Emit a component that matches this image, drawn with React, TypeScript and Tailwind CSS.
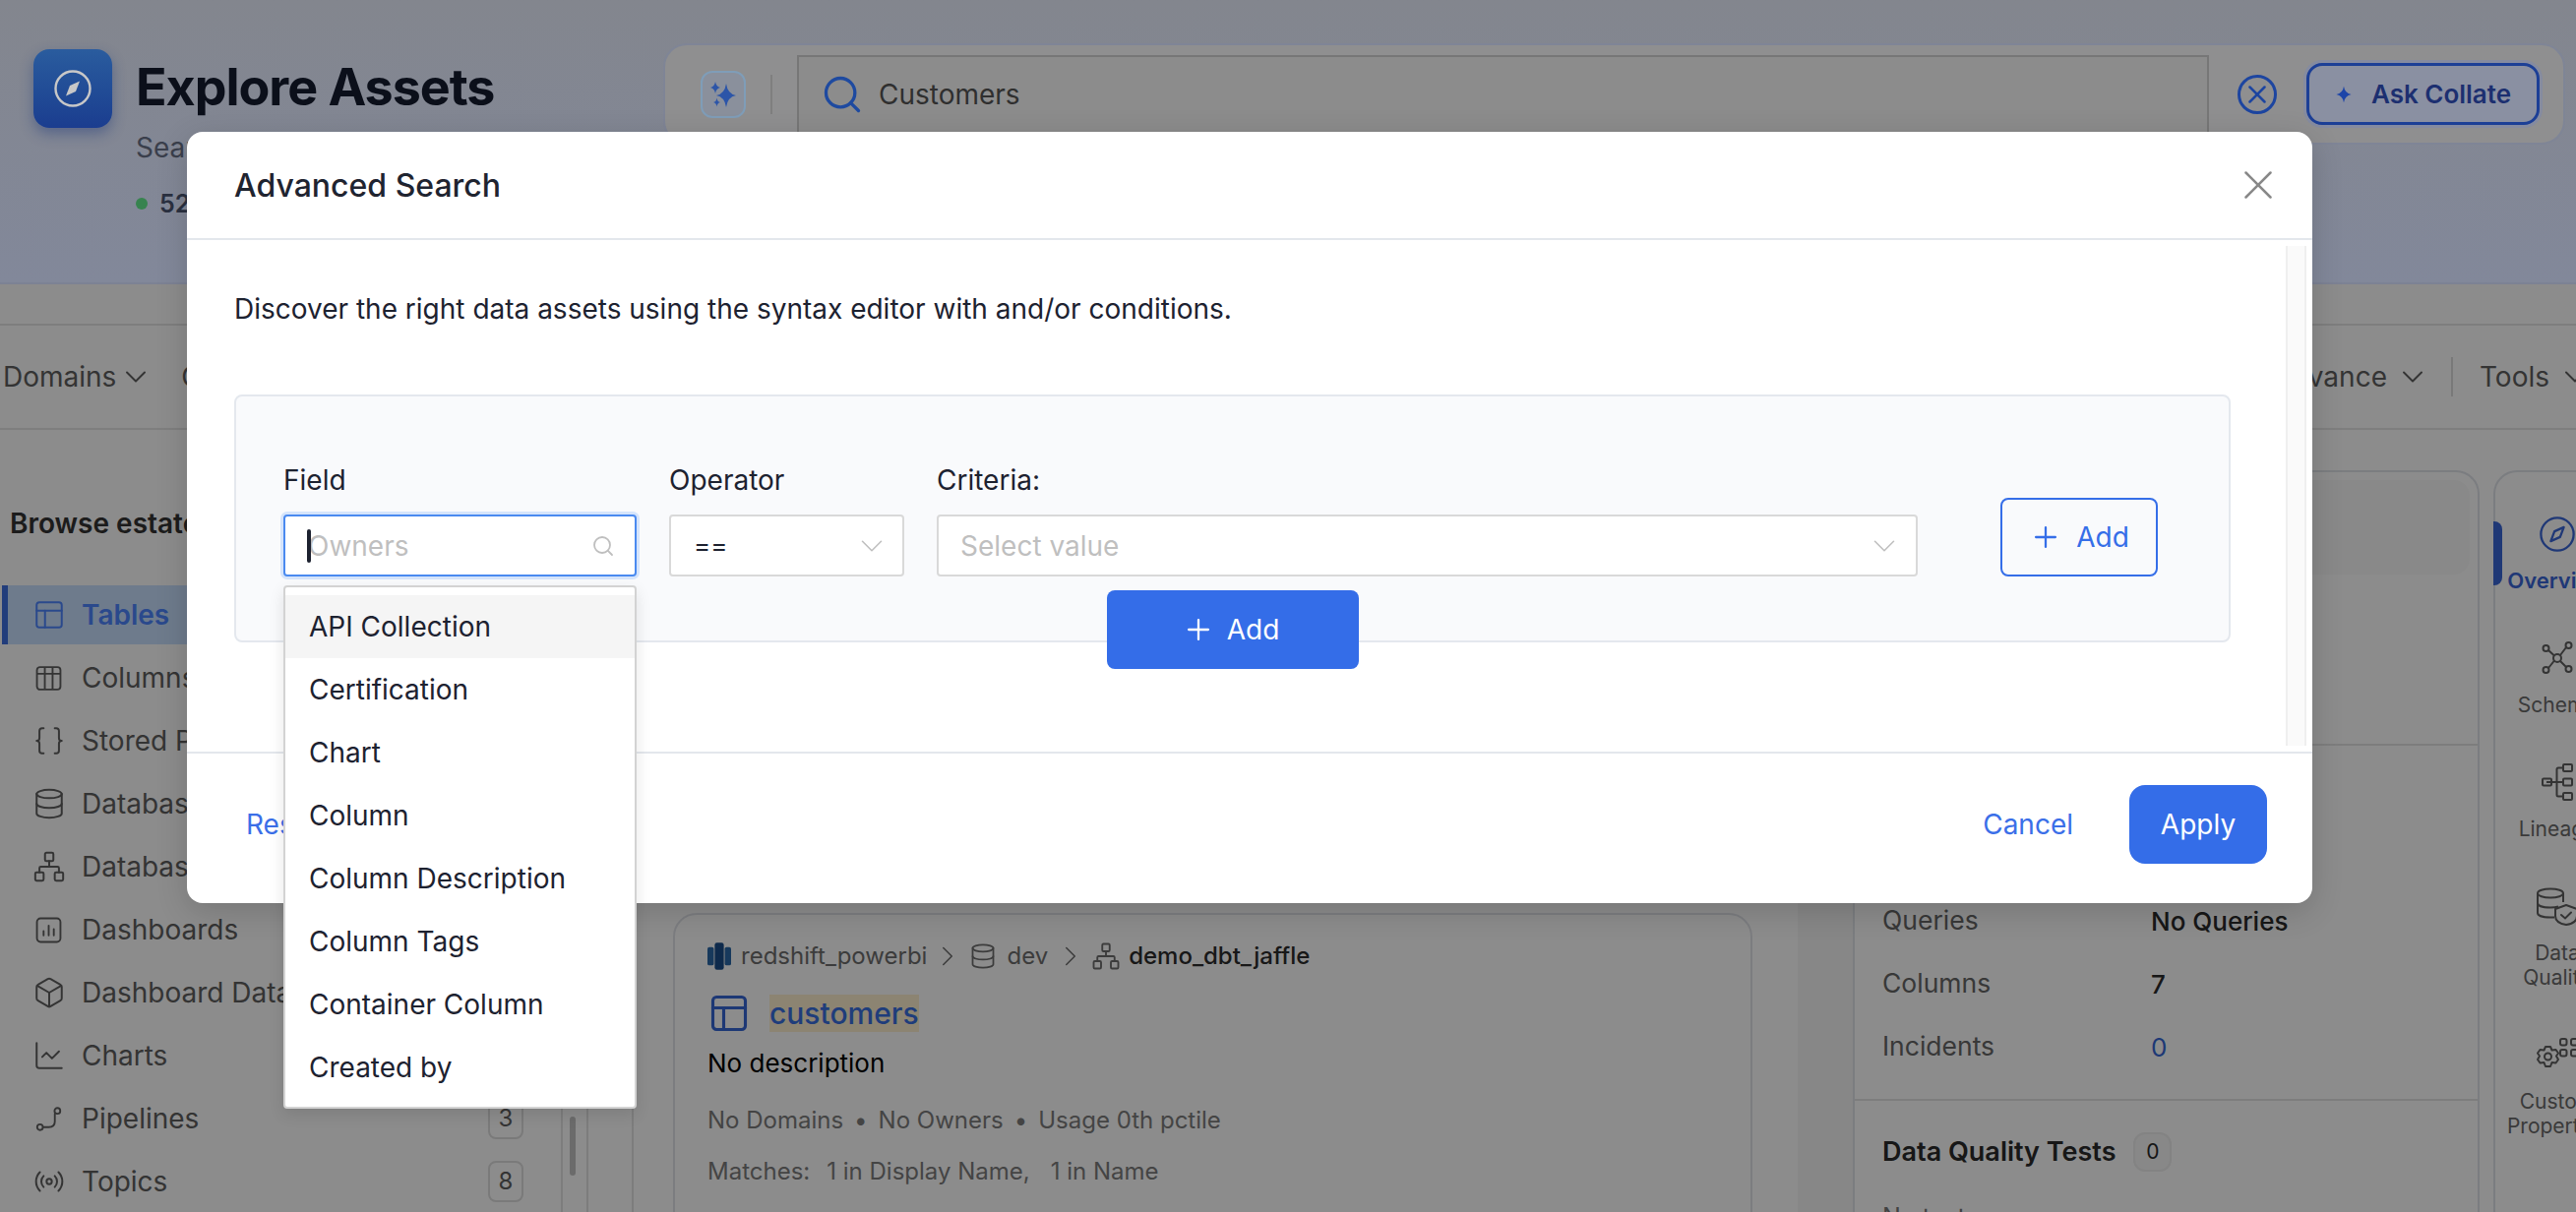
import { useState, type ReactNode } from 'react';
import {
  Box,
  Braces,
  ChartLine,
  ChevronDown,
  ChevronRight,
  Database,
  Network,
  PanelsTopLeft,
  Plus,
  Radio,
  Search,
  X,
} from 'lucide-react';

const FONT = "font-['Inter','Noto_Sans',sans-serif]";

function CompassMark({ className, filled }: { className?: string; filled?: boolean }) {
  return (
    <svg viewBox="0 0 40 40" fill="none" stroke="currentColor" strokeWidth="2.4" className={className}>
      <circle cx="20" cy="20" r="17.5" />
      <path
        d="M27 12.5 23 23 13 27.5 17 17z"
        fill={filled ? 'currentColor' : 'none'}
        stroke={filled ? 'none' : 'currentColor'}
        strokeLinejoin="round"
      />
    </svg>
  );
}

function FourStar({ className }: { className?: string }) {
  return (
    <svg viewBox="0 0 24 24" fill="currentColor" className={className}>
      <path d="M12 1Q13.5 10.5 22 12Q13.5 13.5 12 23Q10.5 13.5 2 12Q10.5 10.5 12 1Z" />
    </svg>
  );
}

function ColumnsIcon({ className }: { className?: string }) {
  return (
    <svg viewBox="0 0 26 26" fill="none" stroke="currentColor" strokeWidth="1.8" className={className}>
      <rect x="1.5" y="2" width="23" height="22" rx="3" />
      <path d="M1.5 8.5h23M9.2 2v22M16.8 2v22" />
    </svg>
  );
}

function DashboardIcon({ className }: { className?: string }) {
  return (
    <svg viewBox="0 0 26 26" fill="none" stroke="currentColor" strokeWidth="1.8" className={className}>
      <rect x="1.5" y="1.5" width="23" height="23" rx="3.5" />
      <path d="M8 18v-4M13 18V8.5M18 18v-6" strokeLinecap="round" />
    </svg>
  );
}

function PipelineIcon({ className }: { className?: string }) {
  return (
    <svg viewBox="0 0 26 26" fill="none" stroke="currentColor" strokeWidth="1.8" className={className}>
      <circle cx="4.5" cy="21" r="2.8" />
      <circle cx="21.5" cy="5" r="2.8" />
      <path d="M7.5 21h5.5c4 0 6-2 6-5.5V8" strokeLinecap="round" />
    </svg>
  );
}

function SparkleTrio({ className }: { className?: string }) {
  return (
    <svg viewBox="0 0 30 30" fill="currentColor" className={className}>
      <path d="M18 4Q19.5 14.5 28 16Q19.5 17.5 18 28Q16.5 17.5 8 16Q16.5 14.5 18 4Z" />
      <path d="M7 2Q7.8 7.2 12 8Q7.8 8.8 7 14Q6.2 8.8 2 8Q6.2 7.2 7 2Z" />
      <path d="M8.5 18.5Q9 22.5 12 23Q9 23.5 8.5 27.5Q8 23.5 5 23Q8 22.5 8.5 18.5Z" />
    </svg>
  );
}

function SchemaIcon({ className }: { className?: string }) {
  return (
    <svg viewBox="0 0 32 34" fill="none" stroke="currentColor" strokeWidth="2" className={className}>
      <circle cx="16" cy="17" r="4" />
      <circle cx="4.5" cy="7" r="3" />
      <circle cx="27.5" cy="4" r="3" />
      <circle cx="4.5" cy="29" r="3" />
      <circle cx="27.5" cy="28" r="3" />
      <path d="M7 9 13 14.5M25 6 19 14M7 27 13 19.5M25 26 19 20" />
    </svg>
  );
}

function LineageIcon({ className }: { className?: string }) {
  return (
    <svg viewBox="0 0 32 40" fill="none" stroke="currentColor" strokeWidth="2" className={className}>
      <rect x="1" y="16.5" width="9" height="7" rx="1" />
      <rect x="22" y="2" width="9" height="7" rx="1" />
      <rect x="22" y="16.5" width="9" height="7" rx="1" />
      <rect x="22" y="31" width="9" height="7" rx="1" />
      <path d="M5 20h17M22 5.5h-5c-1 0-1.5.5-1.5 1.5v26c0 1 .5 1.5 1.5 1.5h5" />
    </svg>
  );
}

function QualityIcon({ className }: { className?: string }) {
  return (
    <svg viewBox="0 0 44 40" fill="none" stroke="currentColor" strokeWidth="2" className={className}>
      <ellipse cx="15" cy="7" rx="13" ry="4.5" />
      <path d="M2 7v20c0 2.5 5 4.5 13 4.5h4M28 7v9M2 17c0 2.5 5 4.5 13 4.5 3 0 6-.3 8-1" />
      <path d="M31 19l11 4v7c0 5-4.5 8-11 9-6.5-1-11-4-11-9v-7z" strokeLinejoin="round" />
      <path d="M26 29l4 3.5 6-6" strokeLinecap="round" />
    </svg>
  );
}

function PropsIcon({ className }: { className?: string }) {
  return (
    <svg viewBox="0 0 44 34" fill="none" stroke="currentColor" strokeWidth="2" className={className}>
      <path d="M15 9l1.5 3.5 4-.5 2.5 3.5-2 3 2 3.5-2.5 3.5-4-.5L15 29h-5l-1.5-4-4 .5L2 22l2-3.5-2-3L4.5 12l4 .5L10 9z" strokeLinejoin="round" />
      <circle cx="12.5" cy="19" r="3.5" />
      <rect x="25" y="1" width="6.5" height="6.5" rx="2" />
      <rect x="36" y="1" width="6.5" height="6.5" rx="2" />
      <rect x="25" y="12" width="6.5" height="6.5" rx="2" />
      <rect x="36" y="12" width="6.5" height="6.5" rx="2" />
    </svg>
  );
}

function RedshiftIcon({ className }: { className?: string }) {
  return (
    <svg viewBox="0 0 26 30" className={className}>
      <rect x="0" y="5" width="7" height="20" rx="2" fill="#2a68a8" />
      <rect x="8" y="0" width="10" height="30" rx="2.5" fill="#1b4e8a" />
      <rect x="19" y="5" width="7" height="20" rx="2" fill="#2a68a8" />
    </svg>
  );
}

const estate: { label: string; icon: ReactNode; count?: number; active?: boolean }[] = [
  { label: 'Tables', icon: <PanelsTopLeft className="size-[34px] flex-none" strokeWidth={1.4} />, active: true },
  { label: 'Columns', icon: <ColumnsIcon className="size-[27px] flex-none" /> },
  { label: 'Stored Procedures', icon: <Braces className="size-[34px] flex-none" strokeWidth={1.4} /> },
  { label: 'Databases', icon: <Database className="size-[34px] flex-none" strokeWidth={1.4} /> },
  { label: 'Database Schemas', icon: <Network className="size-[34px] flex-none" strokeWidth={1.4} /> },
  { label: 'Dashboards', icon: <DashboardIcon className="size-[27px] flex-none" /> },
  { label: 'Dashboard Data Models', icon: <Box className="size-[34px] flex-none" strokeWidth={1.4} /> },
  { label: 'Charts', icon: <ChartLine className="size-[34px] flex-none" strokeWidth={1.4} /> },
  { label: 'Pipelines', icon: <PipelineIcon className="size-[27px] flex-none" />, count: 3 },
  { label: 'Topics', icon: <Radio className="size-[32px] flex-none" strokeWidth={1.5} />, count: 8 },
];

const rail: { lines: string[]; icon: ReactNode; active?: boolean }[] = [
  { lines: ['Overview'], icon: <CompassMark className="size-[38px]" />, active: true },
  { lines: ['Schema'], icon: <SchemaIcon className="h-[34px] w-[32px]" /> },
  { lines: ['Lineage'], icon: <LineageIcon className="h-[40px] w-[32px]" /> },
  { lines: ['Data', 'Quality'], icon: <QualityIcon className="h-[40px] w-[44px]" /> },
  { lines: ['Custom', 'Properties'], icon: <PropsIcon className="h-[34px] w-[44px]" /> },
];

const fields = [
  'API Collection',
  'Certification',
  'Chart',
  'Column',
  'Column Description',
  'Column Tags',
  'Container Column',
  'Created by',
];

const stats = [
  { label: 'Queries', value: 'No Queries' },
  { label: 'Columns', value: '7' },
  { label: 'Incidents', value: '0', link: true },
];

// the header sits above the mask line, so its colours are given as they look dimmed
function Header() {
  return (
    <header className="relative z-[1] flex h-[289px] border-b-2 border-[#7c8294] bg-gradient-to-b from-[#83868e] to-[#82889a] pl-[34px] pt-[44px]">
      <div className="mt-[6px] flex size-[80px] flex-none items-center justify-center rounded-2xl bg-gradient-to-b from-[#2a5c9e] to-[#1b3d8f] text-[#c8c8c8] shadow-[0_6px_14px_rgba(20,50,120,0.4)]">
        <CompassMark className="size-[40px]" filled />
      </div>
      <div className="ml-[24px] w-[536px] flex-none pt-[16px]">
        <h1 className="text-[52px] font-bold leading-[58px] tracking-[-0.02em] text-[#0b0f1a]">Explore Assets</h1>
        <p className="mt-[14px] text-[28px] leading-[36px] text-[#3a3f4c]">Search</p>
        <div className="mt-[21px] flex items-center gap-[12px] text-[25px] font-semibold leading-[36px] text-[#2a3040]">
          <span className="size-[12px] rounded-full bg-[#37834f]" />
          52
        </div>
      </div>
      <div className="flex h-[103px] w-[1933px] flex-none items-center rounded-3xl border-2 border-[#7f8596] bg-[#8f8f90] pl-[36px]">
        <button className="flex h-[48px] w-[46px] flex-none items-center justify-center rounded-xl border-2 border-[#7f9db8] bg-[#8a909c] text-[#2c55a8]">
          <SparkleTrio className="size-[30px]" />
        </button>
        <span className="ml-[25px] h-[40px] w-[2px] flex-none bg-[#7f7f7f]" />
        <div className="ml-[25px] flex h-[80px] w-[1435px] flex-none items-center border-2 border-[#777] bg-[#8c8c8c] pl-[22px]">
          <Search className="size-[44px] text-[#1e4aa0]" strokeWidth={1.8} />
          <span className="ml-[15px] text-[28px] text-[#2f2f2f]">Customers</span>
        </div>
        <button className="ml-[29px] flex size-[40px] flex-none items-center justify-center rounded-full border-[3px] border-[#1d45a0] text-[#1d45a0]">
          <X className="size-[30px]" strokeWidth={2} />
        </button>
        <button className="ml-[30px] flex h-[63px] w-[237px] flex-none items-center justify-center gap-[19px] rounded-2xl border-[3px] border-[#1c3f96] bg-[#8a90a2] text-[26px] font-semibold text-[#1c2f70] shadow-[0_0_0_3px_#858ba0]">
          <FourStar className="size-[18px] text-[#1d45a8]" />
          Ask Collate
        </button>
      </div>
    </header>
  );
}

function FilterItem({ label, wide }: { label: string; wide?: boolean }) {
  return (
    <span className={wide ? 'flex items-center gap-[8px] text-[28px] text-[#5f5f5f]' : 'flex items-center gap-[2px] text-[28px] text-[#5f5f5f]'}>
      {label}
      <ChevronDown className="size-[36px] flex-none" strokeWidth={1.3} />
    </span>
  );
}

function FilterNav() {
  return (
    <div className="flex-none">
      <div className="h-[42px] border-b-2 border-[#e6e6e6]" />
      <nav className="flex h-[106px] items-center border-b-2 border-[#e6e6e6] pl-[3px]">
        <div className="flex items-center gap-[28px]">
          <FilterItem label="Domains" />
          <FilterItem label="Certification" />
        </div>
        <div className="ml-auto mr-[-17px] flex items-center">
          <FilterItem label="Relevance" wide />
          <span className="ml-[21px] mr-[27px] h-[40px] w-[2px] bg-[#dcdcdc]" />
          <FilterItem label="Tools" wide />
        </div>
      </nav>
    </div>
  );
}

function Sidebar() {
  return (
    <aside className="relative w-[572px] flex-none border-r-2 border-[#e4e4e4] pt-[77px]">
      <div className="mb-[45px] pl-[10px] text-[28px] font-semibold leading-[36px] text-[#333]">Browse estate</div>
      {estate.map((item) => (
        <div
          key={item.label}
          className={
            item.active
              ? 'mb-[4px] ml-[2px] flex h-[60px] items-center border-l-[6px] border-[#3f6fe0] bg-[#c9e0ff] pl-[28px] pr-[38px] text-[#4d85ff]'
              : 'mb-[4px] ml-[2px] flex h-[60px] items-center border-l-[6px] border-transparent pl-[28px] pr-[38px] text-[#606060]'
          }
        >
          <span className="flex w-[27px] flex-none items-center justify-center">{item.icon}</span>
          <span className={item.active ? 'ml-[20px] text-[28px] font-semibold' : 'ml-[20px] text-[28px]'}>{item.label}</span>
          {item.count !== undefined && (
            <span className="ml-auto flex h-[42px] w-[36px] items-center justify-center rounded-lg border-2 border-[#dfdfdf] text-[24px]">
              {item.count}
            </span>
          )}
        </div>
      ))}
      <span className="absolute left-[579px] top-[698px] h-[60px] w-[6px] rounded-full bg-[#c4c4c4]" />
    </aside>
  );
}

function ResultCard() {
  return (
    <section className="h-[400px] rounded-3xl border-2 border-[#e2e4ea] bg-white pl-[33px] pt-[26px]">
      <div className="flex h-[32px] items-center text-[24px] text-[#6e6e6e]">
        <RedshiftIcon className="h-[28px] w-[24px] flex-none" />
        <span className="ml-[10px]">redshift_powerbi</span>
        <ChevronRight className="ml-[4px] size-[34px] flex-none" strokeWidth={1.1} />
        <Database className="ml-[5px] size-[28px] flex-none" strokeWidth={1.5} />
        <span className="ml-[10px]">dev</span>
        <ChevronRight className="ml-[6px] size-[34px] flex-none" strokeWidth={1.1} />
        <Network className="ml-[4px] size-[30px] flex-none" strokeWidth={1.5} />
        <span className="ml-[8px] font-medium text-[#2c2c2c]">demo_dbt_jaffle</span>
      </div>
      <div className="mt-[20px] flex items-center">
        <PanelsTopLeft className="size-[44px] flex-none text-[#3566d6]" strokeWidth={1.7} />
        <span className="ml-[19px] bg-[#fff0d0] text-[30px] font-medium leading-[38px] text-[#3a6fe0]">customers</span>
      </div>
      <p className="mt-[11px] text-[26px] leading-[36px] text-black">No description</p>
      <div className="mt-[24px] flex items-center gap-[11px] text-[24px] leading-[32px] text-[#7d7d7d]">
        <span>No Domains</span>
        <span>•</span>
        <span>No Owners</span>
        <span>•</span>
        <span>Usage 0th pctile</span>
      </div>
      <div className="mt-[20px] flex gap-[17px] text-[24px] leading-[32px] text-[#7d7d7d]">
        <span>Matches:</span>
        <span>1 in Display Name,</span>
        <span className="ml-[4px]">1 in Name</span>
      </div>
    </section>
  );
}

function DetailPanel() {
  return (
    <section className="mt-[41px] h-[800px] w-[637px] flex-none rounded-t-3xl border-x-2 border-t-2 border-[#e0e3ea] bg-white">
      <div className="mx-[8px] mt-[8px] h-[96px] rounded-2xl bg-[#fafafa]" />
      <div className="mt-[172px] border-t-2 border-[#e4e4e4] pb-[21px] pl-[28px] pt-[146px]">
        {stats.map((row) => (
          <div key={row.label} className="flex h-[64px] items-center">
            <span className="w-[273px] text-[26.5px] text-[#666]">{row.label}</span>
            <span className={row.link ? 'text-[26px] text-[#3566d6]' : 'text-[26px] font-medium text-[#2a2a2a]'}>{row.value}</span>
          </div>
        ))}
      </div>
      <div className="border-t-2 border-[#e4e4e4] pl-[28px] pt-[32px]">
        <div className="flex h-[40px] items-center text-[27px] font-semibold text-[#2a2a2a]">
          Data Quality Tests
          <span className="ml-[18px] flex h-[40px] w-[39px] items-center justify-center rounded-xl border-2 border-[#eeeeee] bg-[#f7f7f7] text-[21px] font-normal">
            0
          </span>
        </div>
        <p className="mt-[28px] text-[25px] text-[#777]">No tests</p>
      </div>
    </section>
  );
}

function Rail() {
  return (
    <section className="relative ml-[14px] mt-[41px] h-[800px] w-[128px] flex-none rounded-tl-3xl border-l-2 border-t-2 border-[#e0e3ea] bg-white pt-[41px]">
      <span className="absolute left-[-2px] top-[50px] h-[65px] w-[9px] rounded-r-lg bg-[#3a66d8]" />
      {rail.map((item) => (
        <div key={item.lines[0]} className="mb-[44px] flex flex-col items-center">
          <div className={item.active ? 'flex h-[44px] items-center text-[#3a66d8]' : 'flex h-[44px] items-center text-[#5f5f5f]'}>
            {item.icon}
          </div>
          <div
            className={
              item.active
                ? 'mt-[13px] whitespace-nowrap text-center text-[22px] font-semibold leading-[25px] text-[#3a66d8]'
                : 'mt-[13px] whitespace-nowrap text-center text-[21px] leading-[25px] text-[#6a6a6a]'
            }
          >
            {item.lines.map((line) => (
              <div key={line}>{line}</div>
            ))}
          </div>
        </div>
      ))}
    </section>
  );
}

function AdvancedSearchModal() {
  const [hovered, setHovered] = useState(0);

  return (
    <div className="absolute left-[190px] top-[134px] z-10 w-[2160px] rounded-2xl bg-white shadow-[0_8px_32px_rgba(0,0,0,0.16)]">
      <div className="flex h-[110px] items-center border-b-2 border-[#e3e7ec] pl-[48px] pr-[30px]">
        <h2 className="pt-[2px] text-[32px] font-medium text-[#1f2430]">Advanced Search</h2>
        <X className="ml-auto size-[50px] text-[#888]" strokeWidth={1.2} />
      </div>

      <div className="flex h-[520px]">
        <div className="flex-none pl-[48px] pt-[52px]">
          <p className="text-[28px] leading-[36px] text-[#1d2230]">
            Discover the right data assets using the syntax editor with and/or conditions.
          </p>
          <div className="mt-[69px] flex w-[2029px] flex-col items-center rounded-lg border-2 border-[#e4e8ee] bg-[#f9fafc] pt-[67px]">
            <div className="flex w-full items-end pl-[48px]">
              <div className="relative w-[359px] flex-none">
                <label className="mb-[17px] block text-[28px] leading-[36px] text-[#1d2230]">Field</label>
                <div className="flex h-[63px] items-center rounded border-2 border-[#4a8af0] bg-white pl-[22px] pr-[20px] shadow-[0_0_0_3px_#d5e4fb]">
                  <span className="relative z-[1] h-[34px] w-[4px] flex-none rounded-sm bg-[#1d2230]" />
                  <span className="-ml-[3px] text-[28px] text-[#bfbfbf]">Owners</span>
                  <Search className="ml-auto size-[24px] text-[#bfbfbf]" strokeWidth={1.8} />
                </div>
                <ul className="absolute left-0 top-[125px] z-20 w-[359px] rounded border-2 border-[#d3d3d3] bg-white py-[8px] shadow-[0_6px_16px_rgba(0,0,0,0.1)]">
                  {fields.map((field, i) => (
                    <li
                      key={field}
                      onMouseEnter={() => setHovered(i)}
                      className={
                        hovered === i
                          ? 'flex h-[64px] items-center bg-[#f5f5f5] pl-[24px] text-[28px] text-[#1d2230]'
                          : 'flex h-[64px] items-center pl-[24px] text-[28px] text-[#1d2230]'
                      }
                    >
                      {field}
                    </li>
                  ))}
                </ul>
              </div>
              <div className="ml-[33px] w-[239px] flex-none">
                <label className="mb-[17px] block text-[28px] leading-[36px] text-[#1d2230]">Operator</label>
                <div className="flex h-[63px] items-center rounded border-2 border-[#d9d9d9] bg-white pl-[23px] pr-[12px] text-[26px] text-[#1d2230]">
                  ==
                  <ChevronDown className="ml-auto size-[38px] text-[#bfbfbf]" strokeWidth={1} />
                </div>
              </div>
              <div className="ml-[33px] w-[997px] flex-none">
                <label className="mb-[17px] block text-[28px] leading-[36px] text-[#1d2230]">Criteria:</label>
                <div className="flex h-[63px] items-center rounded border-2 border-[#d9d9d9] bg-white pl-[22px] pr-[13px] text-[28px] text-[#bfbfbf]">
                  Select value
                  <ChevronDown className="ml-auto size-[38px]" strokeWidth={1} />
                </div>
              </div>
              <button className="ml-[84px] flex h-[80px] w-[160px] flex-none items-center justify-center gap-[14px] rounded-lg border-2 border-[#356ee8] text-[28px] text-[#356ee8]">
                <Plus className="size-[34px]" strokeWidth={1.6} />
                Add
              </button>
            </div>
            <button className="-mb-[29px] mt-[14px] flex h-[80px] w-[256px] items-center justify-center gap-[12px] rounded-lg bg-[#346de8] pr-[4px] text-[28px] text-white">
              <Plus className="size-[34px]" strokeWidth={1.6} />
              Add
            </button>
          </div>
        </div>
        <div className="ml-auto mr-[6px] mt-[6px] mb-[6px] w-[21px] flex-none border-x-2 border-[#efefef] bg-[#fafafa]" />
      </div>

      <div className="flex h-[154px] items-start border-t-2 border-[#e3e7ec] pl-[60px] pr-[46px] pt-[32px] text-[28px] text-[#3b6fe8]">
        <button className="h-[80px]">Reset</button>
        <button className="ml-auto h-[80px]">Cancel</button>
        <button className="ml-[57px] h-[80px] w-[140px] rounded-2xl bg-[#346de8] text-white">Apply</button>
      </div>
    </div>
  );
}

export default function App() {
  return (
    <div className={`relative h-[1232px] w-[2618px] overflow-hidden bg-white ${FONT}`}>
      <Header />
      <FilterNav />
      <div className="flex">
        <Sidebar />
        <div className="w-[26px] flex-none border-r-2 border-[#e4e4e4]" />
        <div className="w-[46px] flex-none border-r-2 border-[#e4e4e4]" />
        <div className="w-[1183px] flex-none pl-[40px] pr-[46px] pt-[491px]">
          <ResultCard />
        </div>
        <div className="w-[56px] flex-none bg-[#f6f6f6]" />
        <DetailPanel />
        <Rail />
      </div>

      <div className="absolute inset-x-0 bottom-0 top-[289px] bg-black/45" />
      <AdvancedSearchModal />
    </div>
  );
}
